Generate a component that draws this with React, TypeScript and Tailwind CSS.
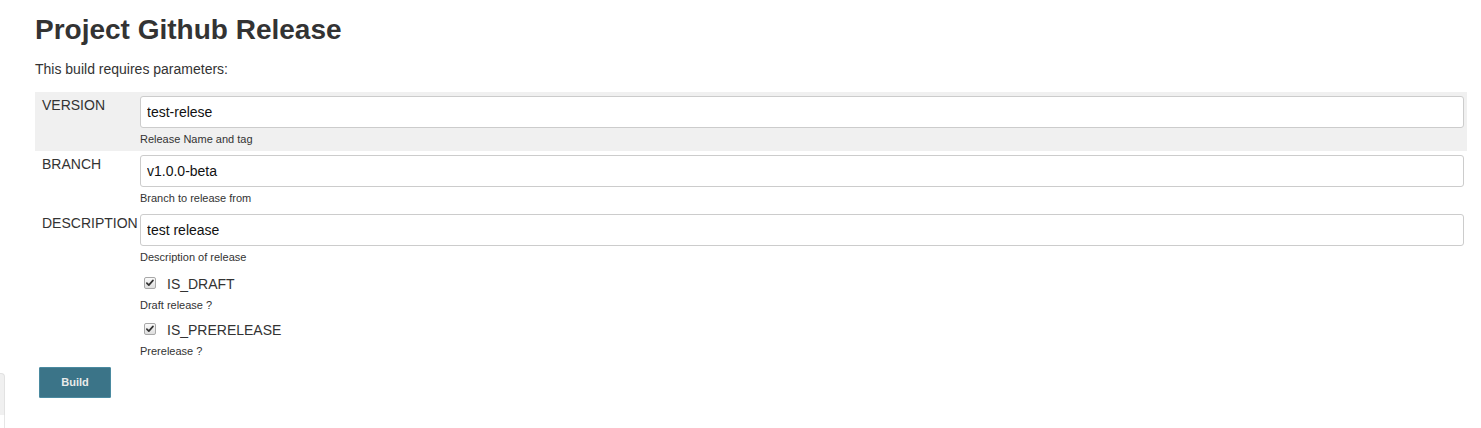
import { useState } from "react";

type Param = {
  name: string;
  value: string;
  help: string;
  shaded?: boolean;
};

const TEXT_PARAMS: Param[] = [
  { name: "VERSION", value: "test-relese", help: "Release Name and tag", shaded: true },
  { name: "BRANCH", value: "v1.0.0-beta", help: "Branch to release from" },
  { name: "DESCRIPTION", value: "test release", help: "Description of release" },
];

const BOOL_PARAMS = [
  { name: "IS_DRAFT", help: "Draft release ?" },
  { name: "IS_PRERELEASE", help: "Prerelease ?" },
];

function CheckBox({ checked, onToggle }: { checked: boolean; onToggle: () => void }) {
  return (
    <button
      type="button"
      onClick={onToggle}
      className="mt-[3px] w-[12px] h-[12px] shrink-0 rounded-[2px] border border-[#a8a8a8] bg-gradient-to-b from-[#fbfbfb] to-[#dedede] flex items-center justify-center"
    >
      {checked && (
        <svg viewBox="0 0 12 12" className="w-[10px] h-[10px]">
          <path d="M2.2 6.2 L4.6 8.6 L9.6 2.8" fill="none" stroke="#333" strokeWidth={2} strokeLinecap="round" strokeLinejoin="round" />
        </svg>
      )}
    </button>
  );
}

export default function App() {
  const [values, setValues] = useState(TEXT_PARAMS.map((p) => p.value));
  const [flags, setFlags] = useState([true, true]);

  return (
    <div className="relative h-[428px] overflow-hidden bg-white text-[#333] font-['Liberation_Sans',Arial,sans-serif] pl-[35px] pr-[14px]">
      <h1 className="pt-[14px] text-[28px] leading-[32px] font-bold">Project Github Release</h1>
      <p className="mt-[13px] text-[14px] leading-[20px]">This build requires parameters:</p>

      <div className="mt-[13px]">
        {TEXT_PARAMS.map((p, i) => (
          <div key={p.name} className={`grid grid-cols-[105px_1fr] ${p.shaded ? "bg-[#f0f0f0]" : ""}`}>
            <div className="pl-[7px] pt-[5px] text-[14px] leading-[16px]">{p.name}</div>
            <div className="pt-[4px] pb-[5px] pr-[3px]">
              <input
                value={values[i]}
                onChange={(e) => setValues(values.map((v, j) => (j === i ? e.target.value : v)))}
                className="block w-full h-[32px] px-[6px] rounded-[3px] border border-[#ccc] bg-white text-[14px] text-[#111] outline-none"
              />
              <div className="mt-[4px] text-[11px] leading-[14px]">{p.help}</div>
            </div>
          </div>
        ))}

        {BOOL_PARAMS.map((p, i) => (
          <div key={p.name} className="grid grid-cols-[105px_1fr]">
            <div />
            <div className="pt-[5px] pb-[3px]">
              <div className="flex items-start pl-[4px] h-[20px]">
                <CheckBox checked={flags[i]} onToggle={() => setFlags(flags.map((f, j) => (j === i ? !f : f)))} />
                <span className="ml-[11px] text-[14px] leading-[20px]">{p.name}</span>
              </div>
              <div className="mt-[4px] text-[11px] leading-[14px]">{p.help}</div>
            </div>
          </div>
        ))}
      </div>

      <button
        type="button"
        className="mt-[6px] ml-[4px] w-[72px] h-[31px] rounded-[1px] border border-[#4a8aa0] bg-[#3b7488] text-[11px] font-bold text-[#eaeaea]"
      >
        Build
      </button>

      {/* edge of the side panel peeking in */}
      <div className="absolute left-0 top-[373px] w-[5px] h-[42px] rounded-tr-[4px] border-t border-r border-[#e2e2e2] bg-[#f0f0f0]" />
      <div className="absolute left-[4px] top-[415px] w-px h-[13px] bg-[#e6e6e6]" />
    </div>
  );
}
